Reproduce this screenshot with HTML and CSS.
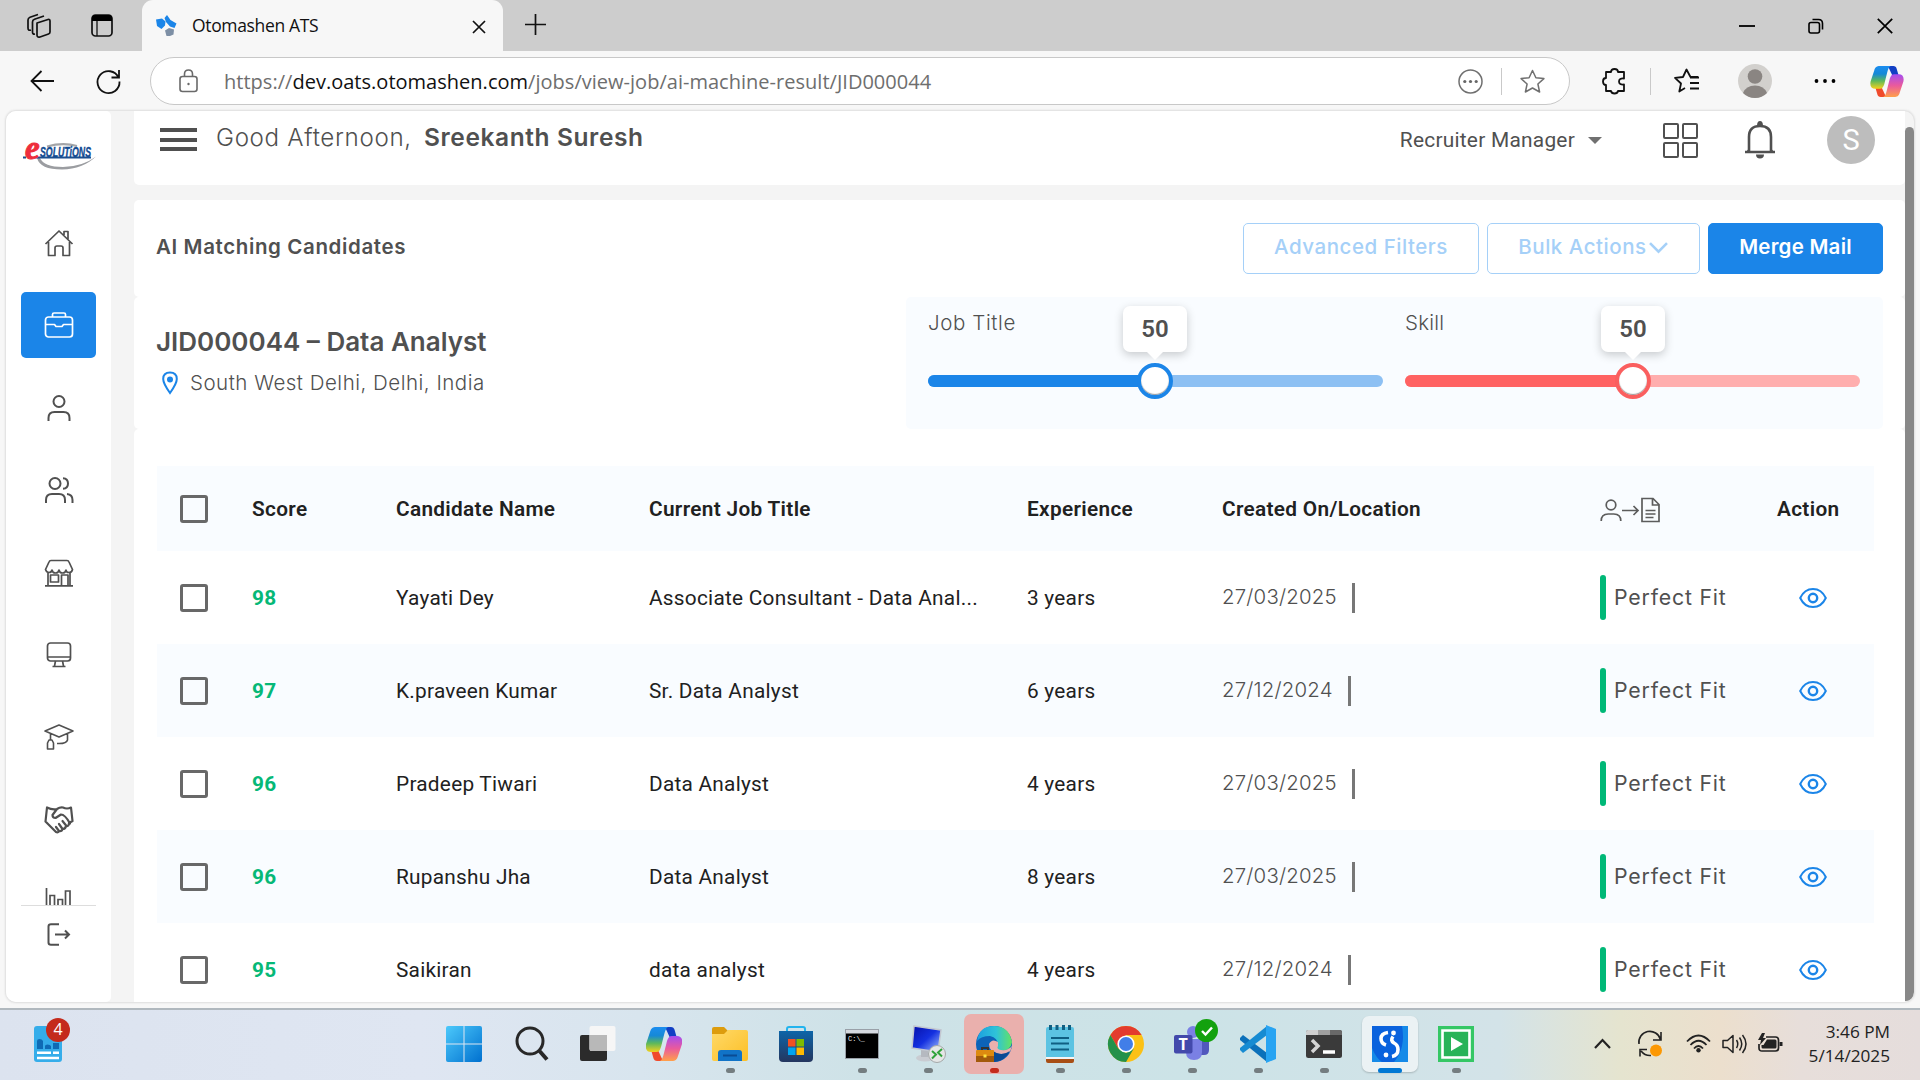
FILE: index.html
```html
<!DOCTYPE html>
<html lang="en">
<head>
<meta charset="utf-8">
<title>Otomashen ATS</title>
<link rel="stylesheet" href="styles.css">
</head>
<body>
<svg class="defs" aria-hidden="true">
  <defs>
    <linearGradient id="cp1" x1="0" y1="0" x2="0" y2="1"><stop offset="0" stop-color="#1b8df0"/><stop offset=".35" stop-color="#1689d6"/><stop offset=".65" stop-color="#5cb85c"/><stop offset="1" stop-color="#f5d21c"/></linearGradient>
    <linearGradient id="cp2" x1="0" y1="0" x2="0" y2="1"><stop offset="0" stop-color="#a54df0"/><stop offset=".5" stop-color="#ea5a9c"/><stop offset="1" stop-color="#ffa04a"/></linearGradient>
    <linearGradient id="win" x1="0" y1="0" x2="1" y2="1"><stop offset="0" stop-color="#4cc9fb"/><stop offset="1" stop-color="#0070cf"/></linearGradient>
    <linearGradient id="fold" x1="0" y1="0" x2="1" y2="1"><stop offset="0" stop-color="#ffd968"/><stop offset="1" stop-color="#fcbf26"/></linearGradient>
    <linearGradient id="edge" x1="0" y1="0" x2="1" y2="0"><stop offset="0" stop-color="#1c9fe0"/><stop offset=".55" stop-color="#2fc3d8"/><stop offset="1" stop-color="#63e362"/></linearGradient>
    <linearGradient id="store" x1="0" y1="0" x2="0" y2="1"><stop offset="0" stop-color="#0d65a8"/><stop offset="1" stop-color="#24365f"/></linearGradient>
    <linearGradient id="screen" x1="0" y1="0" x2="1" y2="1"><stop offset="0" stop-color="#0610a8"/><stop offset=".5" stop-color="#1430e0"/><stop offset="1" stop-color="#a9c6ff"/></linearGradient>
    <symbol id="copilot" viewBox="0 0 36 34">
      <path fill="#123fc4" d="M19 0h6c2 0 3 1 3.600 3l2 7h-7z"/>
      <path fill="#f04b2c" d="M17 34h-6c-2 0-3-1-3.600-3l-2-7h7z"/>
      <path fill="url(#cp1)" d="M10 0h12c-2 1-3 4-4 8l-3 12c-1 3-2 5-5 5H5c-4 0-6-3-5-8L4 5c1-4 3-5 6-5z"/>
      <path fill="url(#cp2)" d="M26 34H14c2-1 3-4 4-8l3-12c1-3 2-5 5-5h5c4 0 6 3 5 8l-4 12c-1 4-3 5-6 5z"/>
    </symbol>
    <symbol id="eye" viewBox="0 0 28 22"><g fill="none" stroke="#1b85e8" stroke-width="2"><path d="M1.200 11C4 5 8.500 2 14 2s10 3 12.800 9C24 17 19.500 20 14 20S4 17 1.200 11z"/><circle cx="14" cy="11" r="4.200" stroke-width="2.400"/></g></symbol>
  </defs>
</svg>

<header class="tabstrip">
  <div class="tab-tools">
    <svg width="26" height="26" viewBox="0 0 26 26" fill="none" stroke="#111" stroke-width="1.700" stroke-linejoin="round"><path d="M11 10l11-3.500q2-.5 2 1.500v11q0 1.500-1.500 2L14 24q-3 .8-3-2z"/><path d="M9 21q-2.500.5-2.500-2V9q0-2 2-2.700L18 3"/><path d="M5 17q-3 1-3-2V7q0-2 2-2.800L12 1.500"/></svg>
    <svg width="22" height="23" viewBox="0 0 22 23"><rect x="1" y="1" width="20" height="21" rx="3.500" fill="none" stroke="#111" stroke-width="1.700"/><path d="M1 7V4q0-3 3-3h14q3 0 3 3v3z"/><path d="M6 7v15" stroke="#111" stroke-width="1.300"/></svg>
  </div>
  <div class="tab">
    <svg class="favicon" width="21" height="21" viewBox="0 0 21 21"><path fill="#1b85e8" d="M0 4.500l6-1 3.500 3-.5 4L5.500 14l-4.500-3z"/><path fill="#1b85e8" d="M8.500 3L11 0l3.500 5 6 3.500-2 4.500-4.500-1.500L10 7z"/><path fill="#7d8fa5" d="M9 15.500l4-2.500 5 1.500-.5 5-3.500 1.500h-3.500z"/></svg>
    <span class="tab-title">Otomashen ATS</span>
    <svg class="tab-x" width="14" height="14" viewBox="0 0 14 14" stroke="#111" stroke-width="1.700"><path d="M1 1l12 12M13 1L1 13"/></svg>
  </div>
  <svg class="plus" width="21" height="21" viewBox="0 0 21 21" stroke="#111" stroke-width="1.700"><path d="M10.500 0v21M0 10.500h21"/></svg>
  <div class="win-controls">
    <svg width="16" height="16" viewBox="0 0 16 16" stroke="#000" stroke-width="1.800"><path d="M0 8h16"/></svg>
    <svg width="16" height="16" viewBox="0 0 16 16" fill="none" stroke="#000" stroke-width="1.600"><rect x="1" y="4.500" width="10.500" height="10.500" rx="2"/><path d="M4.500 1.500h6q4 0 4 4v6"/></svg>
    <svg width="16" height="16" viewBox="0 0 16 16" stroke="#000" stroke-width="1.700"><path d="M.8.800l14.400 14.400M15.200.8L.8 15.200"/></svg>
  </div>
</header>

<nav class="toolbar">
  <svg class="back" width="25" height="22" viewBox="0 0 25 22" fill="none" stroke="#111" stroke-width="1.800"><path d="M24 11H1.500M11.500 1l-10 10 10 10"/></svg>
  <svg class="reload" width="25" height="25" viewBox="0 0 25 25" fill="none" stroke="#111" stroke-width="1.800"><path d="M22.500 8.500A11 11 0 1 0 23.500 12.500M23 1v7.500h-7.500"/></svg>
  <div class="address">
    <svg width="19" height="24" viewBox="0 0 19 24" fill="none" stroke="#6a6a6a" stroke-width="1.600"><rect x="1" y="7.500" width="17" height="15" rx="2.500"/><path d="M5.500 7.500V5q0-4 4-4t4 4v2.500"/><circle cx="9.500" cy="15" r="1.200" fill="#6a6a6a" stroke="none"/></svg>
    <span class="url">https://<b>dev.oats.otomashen.com</b>/jobs/view-job/ai-machine-result/JID000044</span>
    <svg class="more" width="25" height="25" viewBox="0 0 25 25"><circle cx="12.500" cy="12.500" r="11.500" fill="none" stroke="#707070" stroke-width="1.500"/><g fill="#666"><circle cx="6.800" cy="12.500" r="1.600"/><circle cx="12.500" cy="12.500" r="1.600"/><circle cx="18.200" cy="12.500" r="1.600"/></g></svg>
    <i class="sep"></i>
    <svg width="25" height="25" viewBox="0 0 25 25" fill="none" stroke="#707070" stroke-width="1.500" stroke-linejoin="round"><path d="M12.500 1.500l3.400 7.200 8 .9-6 5.400 1.700 8-7.100-4-7.100 4 1.700-8-6-5.400 8-.9z"/></svg>
  </div>
  <svg class="ext" width="24" height="26" viewBox="0 0 24 26" fill="none" stroke="#111" stroke-width="1.800" stroke-linejoin="round"><path d="M4 4h5q0-3 3.500-3T16 4h6v6.500q-5-.5-5 3t5 3V23h-6q-.5 2.500-3.500 2.500T9 23H4v-6q-3 0-3-3.500T4 10z"/></svg>
  <i class="sep ext-sep"></i>
  <svg class="fav" width="26" height="26" viewBox="0 0 26 26" fill="none" stroke="#111" stroke-width="1.800" stroke-linejoin="round"><path d="M24 9h-7.500L12.500 1.500 9 9l-8 .9 6 5.600-1.700 8L11 20M16 9.500h9M16 15h9M16 20.500h9"/></svg>
  <svg class="profile" width="34" height="34" viewBox="0 0 34 34"><circle cx="17" cy="17" r="17" fill="#d2d0cd"/><circle cx="17" cy="12.500" r="7.300" fill="#8a8582"/><path fill="#8a8582" d="M5 29q3-7.500 12-7.500T29 29q-5 5-12 5T5 29z"/></svg>
  <svg class="menu-dots" width="22" height="6" viewBox="0 0 22 6"><circle cx="2.500" cy="3" r="1.900"/><circle cx="11" cy="3" r="1.900"/><circle cx="19.500" cy="3" r="1.900"/></svg>
  <svg class="tb-copilot" width="34" height="31"><use href="#copilot"/></svg>
</nav>

<div class="frame">
<div class="webview">
  <aside class="sidebar">
    <svg class="logo" width="74" height="28" viewBox="0 0 74 28"><path d="M24 3.500Q40-1 54 3" fill="none" stroke="#a3a5a8" stroke-width="2.200"/><path d="M14 15q3 11.500 25 11.500Q60 26 73 13.500 60 23.500 40 24 21 24 17 15z" fill="#9b9da1"/><path fill="#1c4f8f" d="M0 13.500h3v2H0zM12 13.500h56v2H12z"/><text class="logo-e" x="2" y="16">e</text><text class="logo-t" x="17" y="13.500" textLength="51" lengthAdjust="spacingAndGlyphs">SOLUTiONS</text></svg>
    <div class="nav-items">
      <a><svg width="30" height="28" viewBox="0 0 30 28" fill="none" stroke="#505050" stroke-width="1.700" stroke-linejoin="round"><path d="M1.500 15L15 2l13.500 13M4.500 13v13.500h6.500V19q0-2 2-2h4q2 0 2 2v7.500h6.500V13M20 6V2.500h4V10"/></svg></a>
      <a class="on"><svg width="30" height="28" viewBox="0 0 30 28" fill="none" stroke="#fff" stroke-width="1.700" stroke-linejoin="round"><rect x="1.500" y="6" width="27" height="20" rx="3"/><path d="M8.500 6V3.500q0-1.500 1.500-1.500h10q1.500 0 1.500 1.500V6M1.500 13.500h9l1.500 2h6l1.500-2h9"/></svg></a>
      <a><svg width="30" height="28" viewBox="0 0 30 28" fill="none" stroke="#505050" stroke-width="2"><circle cx="15" cy="7.500" r="5.500"/><path d="M4.500 27v-3q0-6 6-6h9q6 0 6 6v3"/></svg></a>
      <a><svg width="30" height="28" viewBox="0 0 30 28" fill="none" stroke="#505050" stroke-width="2"><circle cx="11" cy="7.500" r="5.500"/><path d="M2 27v-3q0-6 6-6h7q6 0 6 6v3M19 2.200q5 .3 5 5.300t-5 5.300M23 18q5.500.5 5.500 6v3"/></svg></a>
      <a><svg width="30" height="28" viewBox="0 0 30 28" fill="none" stroke="#505050" stroke-width="1.700" stroke-linejoin="round"><path d="M1.500 10.500L5 3q.5-1.500 2-1.500h16q1.500 0 2 1.500l3.500 7.500q-.5 3-3.500 3t-3-2.500q-.5 3-3.500 3T15 11q-.5 3-3.500 3T8 11q-.5 2.500-3 2.500t-3.500-3zM4 13.500V26.500M26 13.500V26.500M1 26.800h28M6.500 16h8v7h-8zM17.500 26.500V16h6.500v10.500"/></svg></a>
      <a><svg width="30" height="28" viewBox="0 0 30 28" fill="none" stroke="#505050" stroke-width="1.700" stroke-linejoin="round"><rect x="3.500" y="2" width="23" height="18" rx="3"/><path d="M3.500 16h23M11.500 20l-1 5M18.500 20l1 5M8.500 25.500h13"/></svg></a>
      <a><svg width="30" height="28" viewBox="0 0 30 28" fill="none" stroke="#505050" stroke-width="1.600" stroke-linejoin="round"><path d="M1 8l14-6 14 6-14 6zM6.500 10.500V17M23.500 11v6q-1 4-10.500 3.500M5 17h3l1.500 3v6h-6v-6z"/></svg></a>
      <a><svg width="30" height="28" viewBox="0 0 30 28" fill="none" stroke="#505050" stroke-width="2.200" stroke-linejoin="round" stroke-linecap="round"><path d="M3 1.500l-1.500 14L12 26q2 1 3-1 3 .5 3.500-2 3 0 3.500-3 3 .5 3-3l3.500-2L27 1.500q-4 2-8 0-3-.500-6 1.500Q8 4 3 1.500M13 3L8.500 9q0 3 3 3l5.500-3.500q4 0 9 9M18.500 15l4 5M15 18l3.500 5M12 21l3 4"/></svg></a>
      <a><svg width="30" height="28" viewBox="0 0 30 28" fill="none" stroke="#505050" stroke-width="1.700"><path d="M2.500 0v26M6 26V7.500h4.500V26M14 26V11.500h4.500V26M21.500 26V3H26v23"/></svg></a>
    </div>
    <div class="logout"><svg width="24" height="23" viewBox="0 0 24 23" fill="none" stroke="#505050" stroke-width="2"><path d="M12 1.200H4Q1.500 1.200 1.500 3.500v16q0 2.300 2.500 2.300h8M8 11.500h14M18 7.500l4 4-4 4"/></svg></div>
  </aside>

  <main>
    <section class="topbar">
      <div class="burger"><i></i><i></i><i></i></div>
      <span class="hello">Good Afternoon,</span>
      <strong class="who">Sreekanth Suresh</strong>
      <span class="role">Recruiter Manager</span>
      <i class="caret"></i>
      <div class="apps"><i></i><i></i><i></i><i></i></div>
      <svg class="bell" width="32" height="38" viewBox="0 0 32 38"><path d="M5 31V16Q5 5 16 5t11 11v15M1 31h30" fill="none" stroke="#505050" stroke-width="2.600"/><path fill="#505050" d="M13 5q0-5 3-5t3 5zM12 33.500h8q0 4-4 4t-4-4zM2 31l4-5v5zM30 31l-4-5v5z"/></svg>
      <div class="avatar">S</div>
    </section>

    <section class="panel title-panel">
      <h1>AI Matching Candidates</h1>
      <button class="ghost b1"><span>Advanced Filters</span></button>
      <button class="ghost b2"><span>Bulk Actions</span><svg width="19" height="12" viewBox="0 0 19 12" fill="none" stroke="#a5d0f8" stroke-width="2.600"><path d="M1 1.200l8.500 8.500L18 1.200"/></svg></button>
      <button class="solid b3"><span>Merge Mail</span></button>
    </section>

    <section class="panel job-panel">
      <div class="job">
        <h2>JID000044 – Data Analyst</h2>
        <p><svg width="16" height="24" viewBox="0 0 16 24"><path d="M8 22Q1.200 12.500 1.200 8 1.200 1.500 8 1.500T14.800 8Q14.800 12.500 8 22z" fill="none" stroke="#1b85e8" stroke-width="2"/><circle cx="8" cy="8.500" r="3" fill="#1b85e8"/></svg><span>South West Delhi, Delhi, India</span></p>
      </div>
      <div class="sliders">
        <div class="slider blue"><label>Job Title</label><div class="track"><div class="fill"></div><div class="thumb"></div><div class="tip">50</div></div></div>
        <div class="slider red"><label>Skill</label><div class="track"><div class="fill"></div><div class="thumb"></div><div class="tip">50</div></div></div>
      </div>
    </section>

    <section class="panel table-panel">
      <div class="row head">
        <i class="box"></i><b>Score</b><b>Candidate Name</b><b>Current Job Title</b><b>Experience</b><b>Created On/Location</b>
        <svg class="assign" width="61" height="26" viewBox="0 0 61 26" fill="none" stroke="#5c5c5c" stroke-width="1.700"><circle cx="11" cy="8" r="4.800"/><path d="M1.200 24q0-7 7-7h5.600q7 0 7 7M22 13.500h16M33.500 9l4.500 4.500L33.500 18"/><path d="M42 1.500h11l6 6v17H42zM52.500 1.500V8H59M45.500 13.500h10M45.500 17h10M45.500 20.500h8"/></svg>
        <b>Action</b>
      </div>
      <div class="row"><i class="box"></i><b class="score">98</b><span>Yayati Dey</span><span>Associate Consultant - Data Anal...</span><span>3 years</span><span class="date"><em>27/03/2025</em></span><span class="fit"><em>Perfect Fit</em></span><svg class="eye"><use href="#eye"/></svg></div>
      <div class="row alt"><i class="box"></i><b class="score">97</b><span>K.praveen Kumar</span><span>Sr. Data Analyst</span><span>6 years</span><span class="date"><em>27/12/2024</em></span><span class="fit"><em>Perfect Fit</em></span><svg class="eye"><use href="#eye"/></svg></div>
      <div class="row"><i class="box"></i><b class="score">96</b><span>Pradeep Tiwari</span><span>Data Analyst</span><span>4 years</span><span class="date"><em>27/03/2025</em></span><span class="fit"><em>Perfect Fit</em></span><svg class="eye"><use href="#eye"/></svg></div>
      <div class="row alt"><i class="box"></i><b class="score">96</b><span>Rupanshu Jha</span><span>Data Analyst</span><span>8 years</span><span class="date"><em>27/03/2025</em></span><span class="fit"><em>Perfect Fit</em></span><svg class="eye"><use href="#eye"/></svg></div>
      <div class="row"><i class="box"></i><b class="score">95</b><span>Saikiran</span><span>data analyst</span><span>4 years</span><span class="date"><em>27/12/2024</em></span><span class="fit"><em>Perfect Fit</em></span><svg class="eye"><use href="#eye"/></svg></div>
    </section>
  </main>
  <div class="scroll"></div>
</div>
</div>

<footer class="taskbar">
  <div class="widget">
    <svg width="28" height="36" viewBox="0 0 28 36"><rect width="28" height="36" rx="3" fill="#35adea"/><path fill="#0f6bb5" d="M3 23v-8q0-2 2.500-2T9 15v8zM11 23v-3q0-1.500 2.500-1.500T17 20v3zM19 23v-6h6v6z"/><path stroke="#fff" stroke-width="2.400" d="M3 26.700h14M19 26.700h6M3 32h22"/></svg>
    <span class="badge">4</span>
  </div>
  <div class="apps-row">
    <div><svg width="36" height="36" viewBox="0 0 36 36"><path fill="url(#win)" d="M2 0h15.500v17.500H0V2q0-2 2-2zM18.500 0H34q2 0 2 2v15.500H18.500zM0 18.500h17.500V36H2q-2 0-2-2zM18.500 18.500H36V34q0 2-2 2H18.500z"/></svg></div>
    <div class="search"><svg width="36" height="36" viewBox="0 0 36 36" fill="none" stroke="#282828" stroke-width="3"><circle cx="16" cy="15" r="13"/><path stroke-width="4" d="M25.500 25l7.500 8.500"/></svg></div>
    <div><svg width="36" height="36" viewBox="0 0 36 36"><rect y="9" width="27" height="26" rx="2" fill="#2b2b2b"/><rect x="9.500" y="0" width="26" height="25" rx="2" fill="#f6f6f6"/><path fill="#b8b8b8" d="M9.500 9H27v16H11.500q-2 0-2-2z"/></svg></div>
    <div><svg width="36" height="34"><use href="#copilot"/></svg></div>
    <div class="run"><svg width="36" height="36" viewBox="0 0 36 36"><path fill="#dd9c0d" d="M0 3q0-2 2-2h10l4 4v8H0z"/><path fill="url(#fold)" d="M0 8h12l4-4h18q2 0 2 2v27q0 2-2 2H2q-2 0-2-2z"/><path fill="#1173c7" d="M6 35V27q0-3 3-3h18q3 0 3 3v8z"/><path stroke="#0a4c94" stroke-width="2" d="M11 29.500h14"/></svg></div>
    <div><svg width="36" height="36" viewBox="0 0 36 36"><path d="M9 7V3q0-2 2-2h14q2 0 2 2v4" fill="none" stroke="#22b4ee" stroke-width="2"/><path fill="url(#store)" d="M1 5h34v27q0 4-4 4H5q-4 0-4-4z"/><path fill="#f25022" d="M10 13h7.500v7.500H10z"/><path fill="#7fba00" d="M18.500 13H26v7.500h-7.500z"/><path fill="#00a4ef" d="M10 21.500h7.500V29H10z"/><path fill="#ffb900" d="M18.500 21.500H26V29h-7.500z"/></svg></div>
    <div class="run"><svg width="34" height="30" viewBox="0 0 34 30"><rect x=".5" y=".5" width="33" height="29" fill="#000" stroke="#99a0a8"/><path fill="#d5d9df" d="M1 1h32v3.500H1z"/><text class="cmd" x="3" y="12">C:\_</text></svg></div>
    <div class="run"><svg width="36" height="38" viewBox="0 0 36 38"><ellipse cx="15" cy="33" rx="9" ry="3.500" fill="#c9ccd2"/><path fill="#b5b9c0" d="M11 25h7v7h-7z"/><path fill="url(#screen)" stroke="#c3c7d0" stroke-width="1.500" d="M4 1l27 4-3 22-26-4z"/><circle cx="27" cy="29" r="8.500" fill="#e4e6e6" stroke="#a5a8a8"/><path d="M22 26l4 3.500-4 4M32 24l-4 3.500 4 4" fill="none" stroke="#2fa33a" stroke-width="2"/></svg></div>
    <div class="run alert"><svg width="36" height="36" viewBox="0 0 36 36"><circle cx="18" cy="18" r="18" fill="#0d63b8"/><path fill="url(#edge)" d="M1 15Q3 0 18 0t18 16q-1 9-12 9-5 0-5-2l3-4q0-7-8-9-9 0-13 5z"/><path fill="#eab0ad" d="M22 16q-6-4-9 2 0 8 10 10 6 1 11-2l2-6q-4 5-11 4-5-1-3-4z"/><path fill="#0b4a94" d="M17 25q8 6 17 0-5 10-16 11z"/><rect y="24" width="18" height="12" rx="1" fill="#dd8a10"/><path fill="#a35a0b" d="M0 30h18v6H0z"/><path d="M6 24v-2h6v2" stroke="#333" stroke-width="2" fill="none"/><rect x="7.500" y="28.500" width="3" height="3" fill="#ffe23c"/></svg></div>
    <div class="run"><svg width="28" height="38" viewBox="0 0 28 38"><path fill="#a84f16" d="M0 33h28v3q0 2-2 2H2q-2 0-2-2z"/><path fill="#f5f5f5" d="M0 30h28v4H0z"/><path fill="#5cc3e2" d="M0 4q0-2 2-2h24q2 0 2 2v28H0z"/><path stroke="#0f5f82" stroke-width="2" d="M5 13h18M5 18.500h18M5 24.500h18"/><path stroke="#0f5f82" stroke-width="3" d="M4.500 0v5M11 0v5M17.500 0v5M23.500 0v5"/></svg></div>
    <div class="run"><svg width="36" height="36" viewBox="0 0 36 36"><circle cx="18" cy="18" r="18" fill="#fbc116"/><path fill="#e33b2e" d="M2.400 9A18 18 0 0 1 33.600 9H18l-7.800 13.500z"/><path fill="#24914a" d="M2.400 9l7.800 13.500L18 27l7.800-4.500L18 36A18 18 0 0 1 2.400 9z"/><circle cx="18" cy="18" r="8.600" fill="#fff"/><circle cx="18" cy="18" r="7" fill="#417ee8"/></svg></div>
    <div class="run teams"><svg width="36" height="36" viewBox="0 0 36 36"><circle cx="19" cy="6" r="6" fill="#7a80e4"/><path fill="#5158bd" d="M26 12h9v12q0 5-5 5h-4z"/><path fill="#7a80e4" d="M12 13h16v13q0 8-8 8t-8-8z"/><rect y="9" width="18.500" height="18.500" rx="2" fill="#4349ab"/><text class="teams-t" x="9.200" y="23.500" text-anchor="middle">T</text></svg><span class="ok"><svg width="12" height="10" viewBox="0 0 12 10" fill="none" stroke="#fff" stroke-width="2.400"><path d="M1 5l3.500 3.500L11 1.500"/></svg></span></div>
    <div class="run"><svg width="36" height="38" viewBox="0 0 36 38"><path fill="#0b70ba" d="M0 13l3-3 24 18v9L0 15z"/><path fill="#168bd2" d="M0 25l3 3 24-18V1L0 23z"/><path fill="#28a4f2" d="M26 0l10 4v30l-10 4z"/></svg></div>
    <div class="run"><svg width="36" height="28" viewBox="0 0 36 28"><rect width="36" height="28" rx="2.500" fill="#3a3a3a"/><path fill="#cfcfcf" d="M0 5V2q0-2 2-2h10v5z"/><path fill="#a0a0a0" d="M12 0h12v5H12z"/><path fill="#696969" d="M24 0h10q2 0 2 2v3H24z"/><path d="M6 10l6 6-6 6" fill="none" stroke="#d5d5d5" stroke-width="3.500"/><path stroke="#fff" stroke-width="3.500" d="M17 22h12"/></svg></div>
    <div class="run active"><svg width="36" height="36" viewBox="0 0 36 36"><path fill="#0a62dd" d="M0 0h36v36H0z"/><path fill="#168ae8" d="M22 36Q34 22 30 0h6v36zM0 36V22q4 10 10 14z"/><path d="M16 6.500q-7 1-7 6 0 5 5 6.500M21 10.500q-3 4 1 6.500 4 2 4 6.500 0 6-6 7" fill="none" stroke="#fff" stroke-width="3.600"/><circle cx="21.500" cy="7" r="2.400" fill="#fff"/><circle cx="14" cy="29" r="2.400" fill="#fff"/></svg></div>
    <div class="run"><svg width="36" height="36" viewBox="0 0 36 36"><path fill="#35c765" d="M0 0h36v36H0z"/><path fill="#28b358" d="M6 6h24v24H6z"/><path d="M4.500 4.500h27v27h-27z" fill="none" stroke="#fff" stroke-width="2.600"/><path fill="#fff" d="M13 11l12 7-12 7z"/></svg></div>
  </div>
  <div class="tray">
    <svg class="t1" width="17" height="11" viewBox="0 0 17 11" fill="none" stroke="#222" stroke-width="2.200"><path d="M1 10l7.500-8L16 10"/></svg>
    <svg class="t2" width="25" height="25" viewBox="0 0 25 25" fill="none" stroke="#222" stroke-width="1.600"><path d="M1 12A11 11 0 0 1 22.500 7.500M23 0v8h-8M2 24.500v-7h7M3 19q4 5 10 4.500"/><circle cx="18" cy="18.500" r="6" fill="#fc9803" stroke="none"/></svg>
    <svg class="t3" width="25" height="19" viewBox="0 0 25 19" fill="none" stroke="#222" stroke-width="1.800"><path d="M1 7.500q11.500-12 23 0M4.500 11q8-8.500 16 0M8 14.500q4.500-5 9 0"/><circle cx="12.500" cy="16.300" r="2.200" fill="#222" stroke="none"/></svg>
    <svg class="t4" width="26" height="20" viewBox="0 0 26 20" fill="none" stroke="#222" stroke-width="1.500" stroke-linejoin="round"><path d="M1 6.500h4.500L11 1.500v17l-5.500-5H1zM14.500 6q2.500 4 0 8M17.500 3.500q4.500 6.500 0 13M20.500 1q7 9 0 18"/></svg>
    <svg class="t5" width="25" height="20" viewBox="0 0 25 20"><path d="M8 4h9.500q3 0 3 3v8q0 3-3 3H4q-3 0-3-3v-4" fill="none" stroke="#222" stroke-width="1.700"/><path fill="#222" d="M9 6.500h8q1.500 0 1.500 1.500v6q0 1.500-1.500 1.500H5Q3.500 15.500 3.500 14v-2l2 0zM21.500 9l3 0v4h-3zM4 0L0 7h3l-1 5 6-7H5l2-5z"/></svg>
    <div class="clock"><span>3:46 PM</span><span>5/14/2025</span></div>
  </div>
</footer>
</body>
</html>
```
FILE: styles.css
```css
* { box-sizing: border-box; }
html, body { margin: 0; height: 1080px; overflow: hidden; }
body { display: flex; flex-direction: column; width: 1920px; background: #f7f7f7; color: #505050; font-family: Inter, "Noto Sans", sans-serif; }
svg { display: block; flex: none; overflow: visible; }
i { display: block; }
em { font-style: normal; }
h1, h2, p { margin: 0; }
.defs { position: absolute; width: 0; height: 0; }

/* browser chrome */
.tabstrip { display: flex; align-items: center; height: 51px; flex: none; background: #cdcdcd; font-family: "Open Sans", sans-serif; color: #111; }
.tab-tools { display: flex; align-items: center; gap: 39px; width: 142px; height: 51px; padding-left: 26px; }
.tab { display: flex; align-items: center; width: 361px; height: 51px; padding: 0 17px 0 14px; border-radius: 11px 11px 0 0; background: #f7f7f7; }
.tab-title { margin-left: 15px; padding-bottom: 2px; font-size: 17.500px; letter-spacing: -.35px; }
.tab-x { margin-left: auto; margin-top: 2px; }
.plus { margin: 0 0 2px 22px; }
.win-controls { display: flex; gap: 53px; margin: 0 27px 0 auto; }
.toolbar { display: flex; align-items: center; height: 60px; flex: none; }
.back { margin-left: 30px; }
.reload { margin-left: 41px; margin-right: 29px; }
.address { display: flex; align-items: center; width: 1420px; height: 48px; padding: 0 24px 0 28px; border: 1px solid #c8c8c8; border-radius: 24px; background: #fff; }
.url { margin-left: 26px; font: 20px "Open Sans", sans-serif; color: #6e6e6e; letter-spacing: .02px; white-space: nowrap; }
.url b { font-weight: 400; color: #111; }
.more { margin-left: auto; }
.sep { width: 1px; height: 27px; margin: 0 18px; background: #c9c9c9; }
.ext { margin-left: 32px; }
.ext-sep { margin: 0 23px 0 24px; }
.profile { margin-left: 38px; }
.menu-dots { margin-left: 42px; }
.tb-copilot { margin-left: 34px; }

/* page */
.frame { height: 897px; flex: none; padding: 0 6px; }
.webview { display: flex; height: 891px; border-radius: 10px; overflow: hidden; background: #f4f4f4; box-shadow: 0 0 2px 1px #ddd; }
.sidebar { width: 105px; background: #fff; border-radius: 0 5px 5px 0; display: flex; flex-direction: column; align-items: center; }
.logo { margin: 32px 0 0 2px; }
.logo-e { font: italic 700 33px "Liberation Serif", serif; fill: #ee2d3c; stroke: #ee2d3c; stroke-width: 1px; }
.logo-t { font: italic 700 14.500px "Liberation Sans", sans-serif; fill: #124b92; stroke: #124b92; stroke-width: .4px; }
.nav-items { display: flex; flex-direction: column; gap: 16.400px; width: 75px; height: 696px; margin-top: 39px; overflow: hidden; border-bottom: 1px solid #ddd; }
.nav-items a { display: flex; flex: none; align-items: center; justify-content: center; height: 66px; border-radius: 5px; }
.nav-items .on { background: #1b85e8; }
.logout { margin-top: 17px; }
main { width: 1771px; margin-left: 23px; }
.topbar { display: flex; align-items: center; height: 74px; margin-bottom: 15px; padding: 0 30px 16px 26px; border-radius: 0 0 5px 5px; background: #fff; }
.burger { display: flex; flex-direction: column; gap: 5.500px; width: 37px; margin-top: -1px; }
.burger i { height: 4px; background: #505050; }
.hello { width: 208px; margin-left: 19px; padding-bottom: 5px; font-size: 24.200px; font-weight: 300; letter-spacing: .65px; white-space: nowrap; }
.who { padding-bottom: 6px; font-size: 24.500px; font-weight: 600; letter-spacing: .6px; }
.role { margin-left: auto; font: 20.900px Roboto, sans-serif; letter-spacing: .24px; }
.caret { margin: 0 61px 0 13px; border: 7px solid transparent; border-top-color: #707070; border-bottom: 0; }
.apps { display: grid; grid-template-columns: 16px 16px; gap: 3px; }
.apps i { height: 16px; border: 2px solid #505050; border-radius: 2px; }
.bell { margin-left: 46px; }
.avatar { width: 48px; height: 48px; margin-left: 51px; border-radius: 50%; background: #bdbdbd; color: #fff; font: 29px/48px Roboto, sans-serif; text-align: center; }
.panel { border-radius: 5px; background: #fff; }
.title-panel { display: flex; align-items: flex-start; height: 97px; padding: 23px 22px 0 22px; }
h1 { margin: 12px auto 0 0; font-size: 20.500px; font-weight: 600; line-height: 24px; letter-spacing: .62px; }
button { display: flex; align-items: center; justify-content: center; height: 51px; padding: 0 0 5px; border: 1px solid #a5d0f8; border-radius: 5px; background: #fff; color: #a5d0f8; font: 500 20.500px Inter, sans-serif; letter-spacing: .53px; }
button svg { margin: 4px 0 0 2px; }
.b1 { width: 236px; margin-right: 8px; }
.b2 { width: 213px; margin-right: 8px; padding-right: 1px; }
.b3 { width: 175px; border-color: #1b85e8; background: #1b85e8; color: #fff; font-weight: 600; letter-spacing: .25px; }
.job-panel { display: flex; justify-content: space-between; height: 132px; padding: 0 22px 0 22px; }
h2 { margin-top: 28px; font-size: 26px; font-weight: 600; line-height: 34px; }
.job p { display: flex; align-items: center; margin-top: 12px; padding-left: 6px; font-size: 20.500px; font-weight: 300; line-height: 24px; letter-spacing: .5px; }
.job p svg { margin-top: -1px; }
.job p span { margin-left: 12px; }
.sliders { display: flex; gap: 22px; width: 977px; padding: 13px 22px 0; border-radius: 5px; background: #f9fcff; }
.slider { width: 455px; }
.slider label { display: block; height: 65px; font-size: 20.500px; font-weight: 300; line-height: 26px; letter-spacing: .6px; }
.red label { letter-spacing: .2px; }
.track { position: relative; height: 12px; border-radius: 6px; background: #8dc0f3; }
.fill { width: 50%; height: 12px; border-radius: 6px 0 0 6px; background: #1b85e8; }
.thumb { position: absolute; left: 209px; top: -12px; width: 36px; height: 36px; border: 4px solid #1b85e8; border-radius: 50%; background: #fff; box-shadow: inset 0 -1px 1px #999; }
.red .track { background: #ffaeae; }
.red .fill { background: #ff6262; }
.red .thumb { left: 210px; border-color: #fa5f5f; }
.tip { position: absolute; left: 195px; top: -69px; width: 64px; height: 46px; border-radius: 7px; background: #fff; box-shadow: 0 3px 10px #0003; font: 600 24px/46px Roboto, sans-serif; text-align: center; }
.red .tip { left: 196px; }
.tip::after { content: ""; position: absolute; left: 24px; top: 46px; border: 8px solid transparent; border-top-color: #fff; border-bottom: 0; }
.table-panel { height: 600px; padding: 37px 31px 0 23px; }
.row { display: grid; grid-template-columns: 72px 144px 253px 378px 195px 378px 177px 1fr; align-items: center; height: 93px; padding-left: 23px; color: #212121; font: 20.800px Roboto, sans-serif; letter-spacing: .26px; white-space: nowrap; }
.row b { font-weight: 600; letter-spacing: .32px; }
.head, .alt { background: #f9fcff; }
.head { height: 85px; }
.assign { margin-top: 2px; }
.box { width: 28px; height: 28px; border: 3px solid #686868; border-radius: 3px; }
.row .score { color: #06b877; font-weight: 700; }
.date, .fit { display: flex; align-items: center; color: #505050; font-family: Inter, sans-serif; }
.date { font-size: 20.400px; font-weight: 300; letter-spacing: .2px; }
.fit { font-size: 21.300px; letter-spacing: .8px; }
.date em, .fit em { padding-bottom: 2px; }
.date::after { content: ""; width: 3px; height: 30px; margin-left: 15px; background: #777; }
.fit::before { content: ""; width: 6px; height: 45px; margin-right: 8px; border-radius: 3px; background: #00b877; }
.eye { width: 28px; height: 22px; margin-left: 22px; }
.scroll { width: 9px; height: 874px; margin-top: 16px; border-radius: 5px 5px 9px 0; background: #888; }

/* taskbar */
.taskbar { display: flex; height: 72px; flex: none; border-top: 2px solid #b0b8be; font-family: "Open Sans", sans-serif; color: #222; background: linear-gradient(90deg, #dce3ef 0, #dfe6f2 420px, #d8e5ee 640px, #cee2e7 860px, #cce3e7 1200px, #d3e3e8 1500px, #e5e4cf 1620px, #ecdfcd 1720px, #e7deda 1800px, #e5dddc 1920px); }
.widget { position: relative; width: 431px; padding: 16px 0 0 34px; }
.badge { position: absolute; left: 46px; top: 8px; width: 24px; height: 24px; border-radius: 50%; background: #c42b1c; color: #fff; font-size: 16px; line-height: 23px; text-align: center; }
.apps-row { display: flex; }
.apps-row > div { position: relative; display: flex; align-items: center; justify-content: center; width: 60px; height: 60px; margin: 4px 3px 0; border-radius: 7px; }
.apps-row .search { margin-left: 5px; }
.apps-row .alert { background: #eab0ad; }
.apps-row .active { width: 56px; height: 56px; margin: 6px 5px 0; background: #ebf2f4; box-shadow: 0 1px 2px #0003; }
.run::after { content: ""; position: absolute; left: 26px; bottom: 1px; width: 9px; height: 5px; border-radius: 3px; background: #747d80; }
.apps-row .alert::after { background: #c42b1c; }
.apps-row .active::after { left: 16px; bottom: -1px; width: 24px; background: #0078d4; }
.ok { position: absolute; left: 33px; top: 5px; display: flex; align-items: center; justify-content: center; width: 23px; height: 23px; border-radius: 50%; background: #13a10e; }
.cmd { font: 7px "Liberation Mono", monospace; fill: #eee; }
.teams-t { font: 700 16px "Open Sans", sans-serif; fill: #fff; }
.tray { display: flex; margin: 0 30px 0 auto; height: 70px; }
.t1 { margin: 28px 27px 0 0; }
.t2 { margin: 22px 23px 0 0; }
.t3 { margin: 24px 11px 0 0; }
.t4 { margin: 24px 10px 0 0; }
.t5 { margin: 23px 0 0; }
.clock { display: flex; flex-direction: column; width: 107px; padding-top: 10px; font-size: 17.200px; line-height: 24px; text-align: right; }
```
